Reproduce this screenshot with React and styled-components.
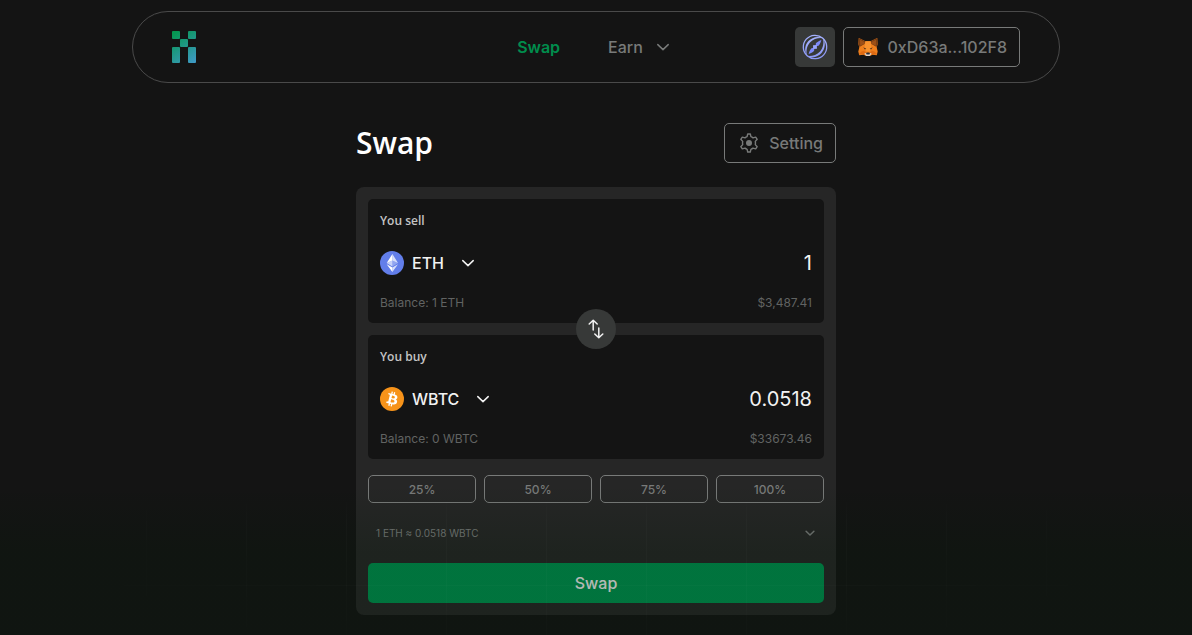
import React, { useState } from "react";
import styled, { createGlobalStyle, css } from "styled-components";

const color = {
  page: "#141414",
  card: "#262626",
  line: "#4a4a4a",
  muted: "#787a79",
  faint: "#616362",
  control: "#373938",
  green: "#008d4d",
};

const GlobalStyle = createGlobalStyle`
  *, *::before, *::after { box-sizing: border-box; }
  body {
    margin: 0;
    background: ${color.page};
    color: #fff;
    font-family: Inter, "Liberation Sans", sans-serif;
    font-size: 16px;
  }
  button, input, select { font: inherit; color: inherit; }
`;

const headingFont = css`
  font-family: "Open Sans", "Noto Sans", sans-serif;
  font-weight: 600;
`;

const Page = styled.div`
  position: relative;
  display: flex;
  flex-direction: column;
  align-items: center;
  gap: 40px;
  min-height: 100vh;
  padding: 11px 20px 20px;
  overflow: hidden;
`;

const Header = styled.header`
  display: grid;
  grid-template-columns: 1fr auto 1fr;
  align-items: center;
  width: 100%;
  max-width: 928px;
  height: 72px;
  padding: 0 39px;
  border: 1px solid ${color.line};
  border-radius: 36px;
`;

const HomeLink = styled.a`
  display: flex;
  justify-self: start;
`;

const Nav = styled.nav`
  display: flex;
  align-items: center;
  gap: 48px;
`;

const NavLink = styled.a`
  display: flex;
  align-items: center;
  gap: 8px;
  line-height: 24px;
  font-weight: ${(p) => (p.$active ? 600 : 500)};
  color: ${(p) => (p.$active ? color.green : color.muted)};
  text-decoration: none;
`;

const Account = styled.div`
  display: flex;
  gap: 8px;
  justify-self: end;
`;

const NetworkButton = styled.button`
  display: grid;
  place-items: center;
  width: 40px;
  height: 40px;
  padding: 0;
  border: 0;
  border-radius: 5px;
  background: ${color.control};
  cursor: pointer;
`;

const OutlineButton = styled.button`
  display: flex;
  align-items: center;
  gap: 8px;
  height: 40px;
  padding: 0 12px;
  border: 1px solid ${color.muted};
  border-radius: 5px;
  background: transparent;
  color: ${color.muted};
  font-weight: 500;
  cursor: pointer;
`;

const Main = styled.main`
  display: flex;
  flex-direction: column;
  gap: 24px;
  width: 100%;
  max-width: 480px;
`;

const TitleRow = styled.div`
  display: flex;
  align-items: center;
  justify-content: space-between;
`;

const Title = styled.h1`
  ${headingFont}
  margin: 0;
  font-size: 30px;
  line-height: 40px;
`;

const Card = styled.form`
  display: flex;
  flex-direction: column;
  gap: 16px;
  padding: 12px;
  border-radius: 8px;
  background: ${color.card};
`;

const Pair = styled.div`
  position: relative;
  display: flex;
  flex-direction: column;
  gap: 12px;
`;

const Panel = styled.section`
  display: flex;
  flex-direction: column;
  gap: 20px;
  padding: 12px;
  border-radius: 5px;
  background: ${color.page};
`;

const PanelLabel = styled.label`
  ${headingFont}
  font-size: 12px;
  line-height: 20px;
  color: #c4c4c4;
`;

const PanelRow = styled.div`
  display: flex;
  align-items: center;
  justify-content: space-between;
  font-size: 12px;
  line-height: 16px;
  color: ${color.faint};
`;

const TokenPicker = styled.label`
  display: grid;
  grid-template-columns: 24px auto 24px;
  align-items: center;
  height: 24px;
  color: #f2f2f2;

  svg:last-child {
    grid-area: 1 / 3;
    pointer-events: none;
  }
`;

const TokenSelect = styled.select`
  grid-area: 1 / 2 / 2 / 4;
  field-sizing: content;
  appearance: none;
  padding: 0 36px 0 8px;
  border: 0;
  background: transparent;
  font-size: 16px;
  font-weight: 500;
  line-height: 24px;
  cursor: pointer;

  option { color: #111; }
`;

const Amount = styled.input`
  flex: 1;
  min-width: 0;
  height: 24px;
  padding: 0;
  border: 0;
  outline: 0;
  background: transparent;
  color: #f2f2f2;
  font-size: 20px;
  text-align: right;
`;

const FlipButton = styled.button`
  position: absolute;
  top: 50%;
  left: 50%;
  display: grid;
  place-items: center;
  width: 40px;
  height: 40px;
  padding: 0;
  border: 0;
  border-radius: 50%;
  background: ${color.control};
  color: #f2f2f2;
  transform: translate(-50%, -50%);
  cursor: pointer;
`;

const Shares = styled.div`
  display: grid;
  grid-template-columns: repeat(4, 1fr);
  gap: 8px;
`;

const ShareButton = styled.button`
  height: 28px;
  padding: 0;
  border: 1px solid ${color.muted};
  border-radius: 5px;
  background: transparent;
  color: ${color.muted};
  font-size: 12px;
  font-weight: 500;
  cursor: pointer;
`;

const RateButton = styled.button`
  display: flex;
  align-items: center;
  justify-content: space-between;
  height: 28px;
  padding: 0 8px;
  border: 0;
  background: transparent;
  color: ${color.muted};
  font-size: 10px;
  cursor: pointer;
`;

const SubmitButton = styled.button`
  height: 40px;
  border: 0;
  border-radius: 5px;
  background: ${color.green};
  color: #e6e6e6;
  font-weight: 500;
  cursor: pointer;
`;

const Glow = styled.div`
  position: absolute;
  inset: auto 0 0;
  height: 150px;
  background: linear-gradient(rgba(2, 25, 6, 0), rgba(2, 25, 6, 0.22) 45%);
  pointer-events: none;

  &::after {
    content: "";
    position: absolute;
    inset: 0;
    background:
      linear-gradient(rgba(255, 255, 255, 0.02), rgba(255, 255, 255, 0.02)) 0 100px / 100% 1px no-repeat,
      linear-gradient(90deg, rgba(255, 255, 255, 0.02) 1px, transparent 1px) 50% 0 / 100px 100%;
    mask-image:
      linear-gradient(transparent 5%, #000 25%),
      radial-gradient(ellipse 55% 120% at 50% 20%, #000 40%, transparent 100%);
    mask-composite: intersect;
  }
`;

function Chevron({ size = 24, box = "0 0 24 24", weight = 1.5 }) {
  return (
    <svg width={size} height={size} viewBox={box} fill="none" stroke="currentColor" strokeWidth={weight} strokeLinecap="round" strokeLinejoin="round" aria-hidden="true">
      <path d="M6.8 9.6 12 14.6l5.2-5" />
    </svg>
  );
}

function Logo() {
  return (
    <svg width="24" height="32" viewBox="0 0 24 32" fill="url(#logo-fill)" role="img" aria-label="Home">
      <defs>
        <linearGradient id="logo-fill" gradientUnits="userSpaceOnUse" x1="2" y1="2" x2="24" y2="31">
          <stop stopColor="#059650" />
          <stop offset="1" stopColor="#3f9ac6" />
        </linearGradient>
      </defs>
      <rect width="8" height="8" rx="1" />
      <rect x="16" width="8" height="8" rx="1" />
      <rect x="8" y="8" width="8" height="8" rx="1" />
      <rect y="16" width="8" height="16" rx="1" />
      <rect x="16" y="16" width="8" height="16" rx="1" />
    </svg>
  );
}

function NetworkIcon() {
  return (
    <svg width="26" height="26" viewBox="0 0 26 26" fill="none" aria-hidden="true">
      <defs>
        <linearGradient id="orb" x1="0" y1="0" x2="1" y2="1">
          <stop stopColor="#a9b6ff" />
          <stop offset="1" stopColor="#8793f5" />
        </linearGradient>
      </defs>
      <g transform="rotate(42 13 13)">
        <circle cx="13" cy="13" r="11.7" stroke="url(#orb)" strokeWidth="1.3" />
        <path fill="url(#orb)" d="M13 1C7 3 4.200 8 4.200 13S7 23 13 25C9 22 6.200 18 6.200 13S9 4 13 1ZM13 1c6 2 8.800 7 8.800 12S19 23 13 25c4-3 6.800-7 6.800-12S17 4 13 1Z" />
        <path fill="#7d89fa" d="M13 3.500c1.400 2.600 1.800 4.600 1.800 6.200L13 12l-1.800-2.300c0-1.600.4-3.600 1.800-6.200ZM13 22.500c-1.400-2.600-1.800-4.600-1.800-6.200L13 14l1.800 2.300c0 1.600-.4 3.600-1.800 6.200Z" />
        <path fill="#98a4ff" d="M10.400 13 13 10.200l2.600 2.800-2.600 2.800Z" />
      </g>
    </svg>
  );
}

function FoxIcon() {
  return (
    <svg width="24" height="24" viewBox="0 0 24 24" aria-hidden="true">
      <path fill="#ef7f1c" d="M2.800 3 9.400 6.300h5.200L21.200 3l.4 6-.9 3.400 1 4.200-.9 3.600-4.400-.4-2.400 1.100h-4l-2.400-1.100-4.400.4-.9-3.600 1-4.200-.9-3.400Z" />
      <path fill="#7a3f14" d="M2.800 3 9.400 6.300 8.600 9l-5.200 3-1-3ZM21.200 3l-6.600 3.300.8 2.700 5.200 3 1-3Z" />
      <path fill="#c9661b" d="m4 4.800 4.800 2.400-.6 1.500-4 2ZM20 4.800l-4.800 2.400.6 1.500 4 2Z" opacity=".45" />
      <path fill="#f7922e" d="M9.400 6.300h5.200l.8 6.400-1.600 3.900h-3.600l-1.600-3.900Z" />
      <path fill="#d4600f" d="m8 15.800 2.200 2.300-2.600 1.400-4.900-.3 2.900-2.600ZM16 15.800l-2.200 2.300 2.600 1.400 4.900-.3-2.900-2.600Z" opacity=".65" />
      <path fill="#4a2c18" d="m7.300 12.300 3 1.500-1.400.7ZM16.700 12.300l-3 1.500 1.400.7Z" />
      <path fill="#ddd3ca" d="m8.400 18.600 1.900-.6h3.400l1.900.6-1.800 2.500h-3.600Z" />
      <path fill="#2b2f38" d="m10.200 18.200.5-.6h2.600l.5.600-.3 1.400h-3Z" />
    </svg>
  );
}

function GearIcon() {
  return (
    <svg width="24" height="24" viewBox="0 0 24 24" fill="none" stroke="currentColor" strokeWidth="1.4" strokeLinejoin="round" aria-hidden="true">
      <path d="M10.700 3h2.600l.6 2.700c.8.300 1.500.7 2.100 1.200l2.700-.8L20.200 8.300l-1.900 2.100a7 7 0 0 1 0 3.200l1.900 2.100-1.500 2.200-2.700-.8c-.6.500-1.300.9-2.100 1.200l-.6 2.700h-2.600l-.6-2.700c-.8-.3-1.500-.7-2.100-1.200l-2.700.8-1.500-2.200 1.900-2.100a7 7 0 0 1 0-3.200L3.800 8.300l1.500-2.200 2.700.8c.6-.5 1.300-.9 2.100-1.200Z" />
      <circle cx="12" cy="12" r="3" fill="currentColor" stroke="none" />
    </svg>
  );
}

function EthIcon() {
  return (
    <svg width="24" height="24" viewBox="0 0 24 24" aria-hidden="true">
      <circle cx="12" cy="12" r="12" fill="#627eea" />
      <path fill="#fff" fillOpacity=".75" d="M12.400 3v6.600l5.600 2.500ZM12.400 16.500V21L18 13.200Z" />
      <path fill="#fff" d="M12.400 3 6.700 12.100l5.700-2.500ZM12.400 16.500V21L6.700 13.200Z" />
      <path fill="#fff" fillOpacity=".3" d="m12.400 15.400 5.600-3.300-5.600-2.500Z" />
      <path fill="#fff" fillOpacity=".65" d="m6.700 12.100 5.700 3.300V9.600Z" />
    </svg>
  );
}

function BtcIcon() {
  return (
    <svg width="24" height="24" viewBox="0 0 32 32" aria-hidden="true">
      <circle cx="16" cy="16" r="16" fill="#f7931a" />
      <path fill="#fff" d="M23.189 14.020c.314-2.096-1.283-3.223-3.465-3.975l.708-2.840-1.728-.430-.690 2.765c-.454-.114-.920-.220-1.385-.326l.695-2.783L15.596 6l-.708 2.839c-.376-.086-.746-.170-1.104-.260l.002-.009-2.384-.595-.460 1.846s1.283.294 1.256.312c.700.175.826.638.805 1.006l-.806 3.235c.048.012.110.030.180.057l-.183-.045-1.130 4.532c-.086.212-.303.531-.793.410.018.025-1.256-.313-1.256-.313l-.858 1.978 2.250.561c.418.105.828.215 1.231.318l-.715 2.872 1.727.430.708-2.840c.472.127.930.245 1.378.357l-.706 2.828 1.728.430.715-2.866c2.948.558 5.164.333 6.097-2.333.752-2.146-.037-3.385-1.588-4.192 1.130-.260 1.980-1.003 2.207-2.538zm-3.950 5.538c-.533 2.147-4.148.986-5.320.695l.950-3.805c1.172.293 4.929.872 4.370 3.110zm.535-5.569c-.487 1.953-3.495.960-4.470.717l.860-3.450c.975.243 4.118.696 3.610 2.733z" />
    </svg>
  );
}

function FlipIcon() {
  return (
    <svg width="24" height="24" viewBox="0 0 24 24" fill="none" stroke="currentColor" strokeWidth="1.5" strokeLinecap="round" strokeLinejoin="round" aria-hidden="true">
      <path d="M9.200 13V3.500M5.200 7l4-3.800 4 3.800M14.800 11v9.500M10.800 17l4 3.800 4-3.800" />
    </svg>
  );
}

const tokenIcons = { ETH: EthIcon, WBTC: BtcIcon };

function TokenPanel({ id, label, token, onToken, amount, onAmount, balance, value }) {
  const Icon = tokenIcons[token];
  return (
    <Panel>
      <PanelLabel htmlFor={id}>{label}</PanelLabel>
      <PanelRow>
        <TokenPicker>
          <Icon />
          <TokenSelect aria-label={`${label} token`} value={token} onChange={(e) => onToken(e.target.value)}>
            <option>ETH</option>
            <option>WBTC</option>
          </TokenSelect>
          <Chevron />
        </TokenPicker>
        <Amount id={id} inputMode="decimal" value={amount} readOnly={!onAmount} onChange={(e) => onAmount?.(e.target.value)} />
      </PanelRow>
      <PanelRow>
        <span>Balance: {balance} {token}</span>
        <span>{value}</span>
      </PanelRow>
    </Panel>
  );
}

export default function App() {
  const [sellToken, setSellToken] = useState("ETH");
  const [buyToken, setBuyToken] = useState("WBTC");
  const [amount, setAmount] = useState("1");

  const flip = () => {
    setSellToken(buyToken);
    setBuyToken(sellToken);
  };

  return (
    <>
      <GlobalStyle />
      <Page>
        <Header>
          <HomeLink href="#home"><Logo /></HomeLink>
          <Nav>
            <NavLink href="#swap" $active>Swap</NavLink>
            <NavLink href="#earn">Earn <Chevron /></NavLink>
          </Nav>
          <Account>
            <NetworkButton type="button" aria-label="Network"><NetworkIcon /></NetworkButton>
            <OutlineButton type="button"><FoxIcon />0xD63a...102F8</OutlineButton>
          </Account>
        </Header>
        <Main>
          <TitleRow>
            <Title>Swap</Title>
            <OutlineButton type="button"><GearIcon />Setting</OutlineButton>
          </TitleRow>
          <Card onSubmit={(e) => e.preventDefault()}>
            <Pair>
              <TokenPanel id="sell" label="You sell" token={sellToken} onToken={setSellToken} amount={amount} onAmount={setAmount} balance="1" value="$3,487.41" />
              <TokenPanel id="buy" label="You buy" token={buyToken} onToken={setBuyToken} amount="0.0518" balance="0" value="$33673.46" />
              <FlipButton type="button" aria-label="Switch tokens" onClick={flip}><FlipIcon /></FlipButton>
            </Pair>
            <Shares>
              {[25, 50, 75, 100].map((share) => (
                <ShareButton key={share} type="button" onClick={() => setAmount(String(share / 100))}>{share}%</ShareButton>
              ))}
            </Shares>
            <RateButton type="button">1 ETH ≈ 0.0518 WBTC <Chevron size={12} box="4 4 16 16" weight={2} /></RateButton>
            <SubmitButton type="submit">Swap</SubmitButton>
          </Card>
        </Main>
        <Glow />
      </Page>
    </>
  );
}
